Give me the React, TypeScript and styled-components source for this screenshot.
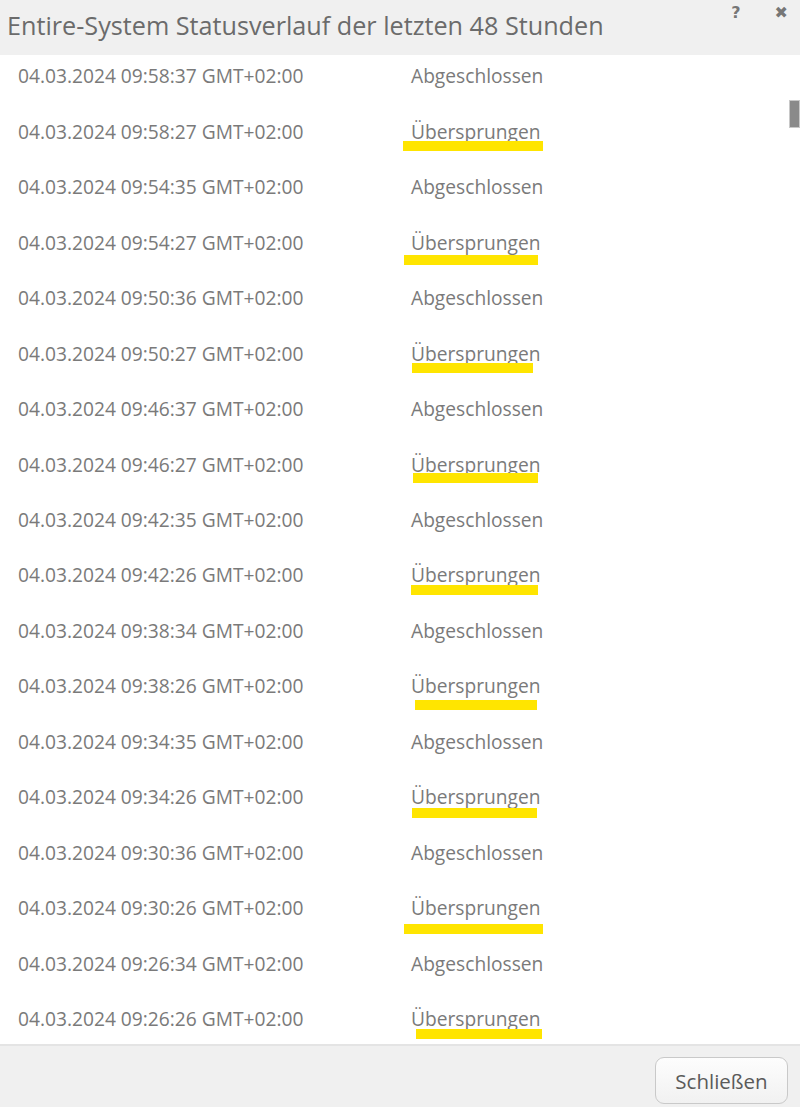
import styled, { createGlobalStyle } from "styled-components";

const Global = createGlobalStyle`
  html, body {
    margin: 0;
    padding: 0;
    background: #ffffff;
    font-family: "Open Sans", "Liberation Sans", sans-serif;
  }
`;

const Dialog = styled.div`
  width: 800px;
  height: 1107px;
  display: flex;
  flex-direction: column;
  background: #ffffff;
  overflow: hidden;
`;

const Header = styled.div`
  height: 55px;
  flex: none;
  background: #f0f0f0;
  display: flex;
  align-items: flex-start;
  justify-content: space-between;
`;

const Title = styled.h1`
  margin: 0;
  padding: 9px 0 0 7px;
  font-size: 25.2px;
  font-weight: 400;
  color: #6b6b6b;
  line-height: 32px;
  white-space: nowrap;
`;

const Tools = styled.div`
  display: flex;
  gap: 34px;
  padding: 3px 12px 0 0;
`;

const ToolIcon = styled.span`
  font-family: "DejaVu Sans", sans-serif;
  font-weight: 700;
  font-size: 16px;
  color: #777777;
  line-height: 20px;
`;

const Body = styled.div`
  height: 989px;
  flex: none;
  position: relative;
  overflow: hidden;
  border-bottom: 2px solid #e4e4e4;
`;

const List = styled.div`
  margin-top: -7px;
`;

const Row = styled.div`
  height: 55.47px;
  display: grid;
  grid-template-columns: 393px 1fr;
  align-items: center;
  padding-left: 18px;
  font-size: 19.2px;
  color: #7a7a7a;
  position: relative;
`;

const Cell = styled.span`
  white-space: nowrap;
`;

const Mark = styled.span`
  position: absolute;
  height: 10px;
  background: #ffe500;
`;

const Scrollbar = styled.div`
  position: absolute;
  right: 0;
  top: 45px;
  width: 11px;
  height: 28px;
  background: #8a8a8a;
  border: 1px solid #c8c8c8;
  box-sizing: border-box;
`;

const Footer = styled.div`
  flex: 1;
  background: #f0f0f0;
  display: flex;
  justify-content: flex-end;
  align-items: flex-start;
  padding: 11px 12px 0 0;
`;

const Button = styled.button`
  width: 133px;
  height: 47px;
  border: 1px solid #c9c9c9;
  border-radius: 9px;
  background: linear-gradient(#fdfdfd, #f1f1f1);
  font-family: "Open Sans", "Liberation Sans", sans-serif;
  font-size: 20.5px;
  color: #5a5a5a;
`;

type Entry = {
  time: string;
  skipped: boolean;
  mark?: { left: number; top: number; width: number };
};

const entries: Entry[] = [
  { time: "09:58:37", skipped: false },
  { time: "09:58:27", skipped: true, mark: { left: 403, top: 38, width: 140 } },
  { time: "09:54:35", skipped: false },
  { time: "09:54:27", skipped: true, mark: { left: 404, top: 41, width: 134 } },
  { time: "09:50:36", skipped: false },
  { time: "09:50:27", skipped: true, mark: { left: 412, top: 38, width: 121 } },
  { time: "09:46:37", skipped: false },
  { time: "09:46:27", skipped: true, mark: { left: 413, top: 37, width: 125 } },
  { time: "09:42:35", skipped: false },
  { time: "09:42:26", skipped: true, mark: { left: 411, top: 38, width: 127 } },
  { time: "09:38:34", skipped: false },
  { time: "09:38:26", skipped: true, mark: { left: 415, top: 42, width: 122 } },
  { time: "09:34:35", skipped: false },
  { time: "09:34:26", skipped: true, mark: { left: 412, top: 39, width: 125 } },
  { time: "09:30:36", skipped: false },
  { time: "09:30:26", skipped: true, mark: { left: 404, top: 44, width: 139 } },
  { time: "09:26:34", skipped: false },
  { time: "09:26:26", skipped: true, mark: { left: 416, top: 38, width: 126 } },
];

export default function App() {
  return (
    <Dialog>
      <Global />
      <Header>
        <Title>Entire-System Statusverlauf der letzten 48 Stunden</Title>
        <Tools>
          <ToolIcon>?</ToolIcon>
          <ToolIcon>✖</ToolIcon>
        </Tools>
      </Header>
      <Body>
        <List>
          {entries.map((e) => (
            <Row key={e.time}>
              <Cell>04.03.2024 {e.time} GMT+02:00</Cell>
              <Cell>{e.skipped ? "Übersprungen" : "Abgeschlossen"}</Cell>
              {e.mark && (
                <Mark
                  style={{ left: e.mark.left, top: e.mark.top, width: e.mark.width }}
                />
              )}
            </Row>
          ))}
        </List>
        <Scrollbar />
      </Body>
      <Footer>
        <Button>Schließen</Button>
      </Footer>
    </Dialog>
  );
}
